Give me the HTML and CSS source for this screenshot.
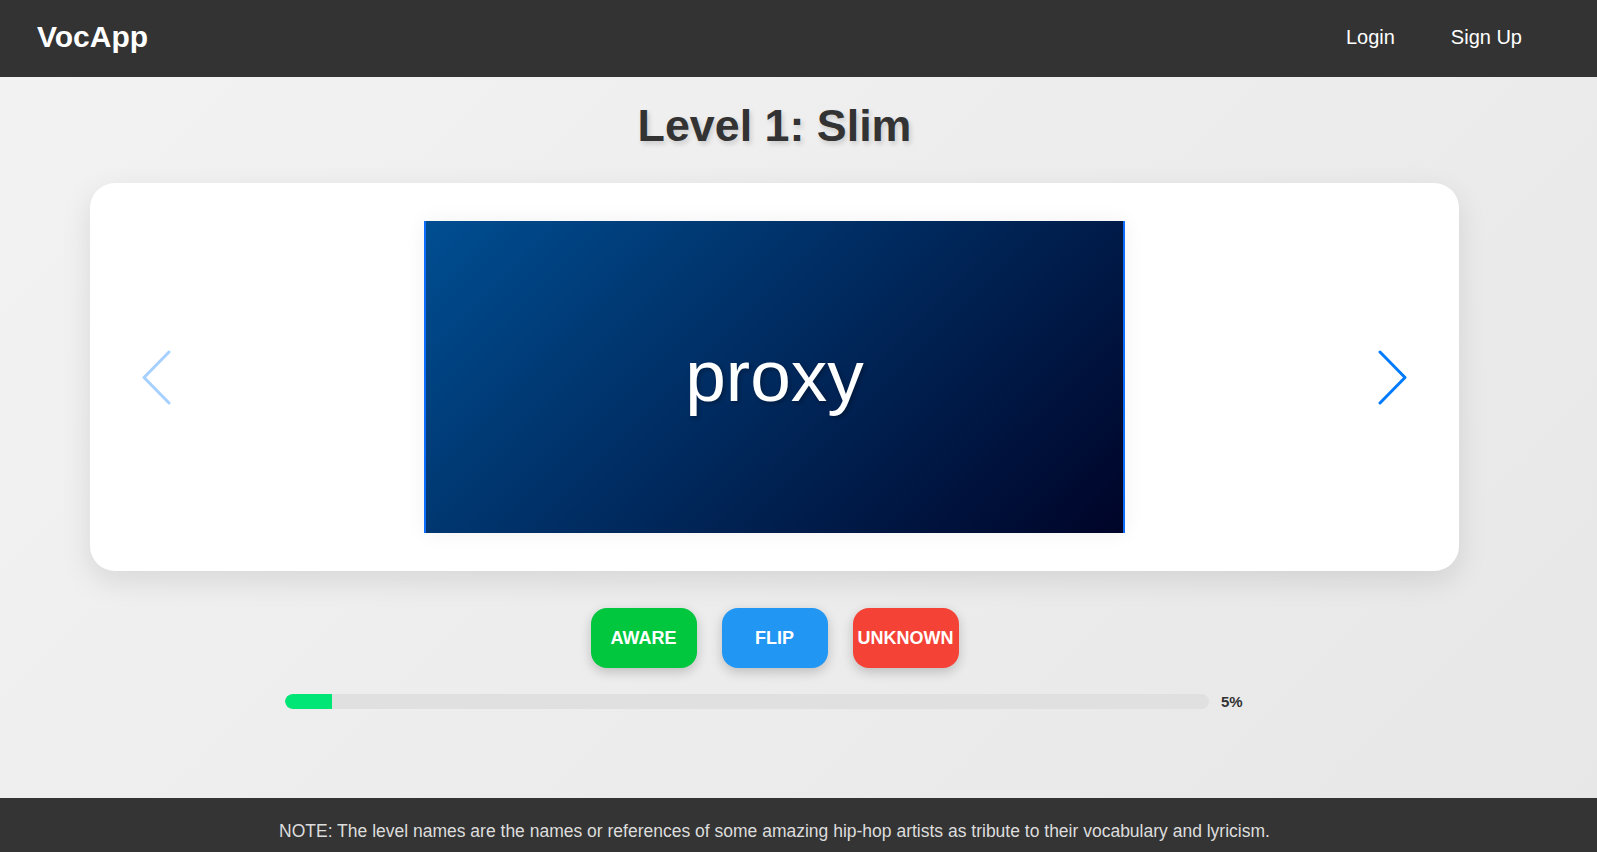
FILE: index.html
```html
<!DOCTYPE html>
<html lang="en">
<head>
<meta charset="utf-8">
<title>VocApp</title>
<link rel="stylesheet" href="styles.css">
</head>
<body>
<header class="topbar">
  <a class="logo" href="#">VocApp</a>
  <nav class="nav">
    <a href="#">Login</a>
    <a href="#">Sign Up</a>
  </nav>
</header>
<main class="main">
  <h1 class="level-title">Level 1: Slim</h1>
  <section class="card">
    <button class="arrow arrow-disabled" aria-label="Previous">
      <svg width="30" height="55" viewBox="0 0 30 55"><path d="M28 2 L3 27.5 L28 53" fill="none" stroke="currentColor" stroke-width="3" stroke-linecap="round" stroke-linejoin="round"/></svg>
    </button>
    <div class="flashcard">
      <span class="word">proxy</span>
    </div>
    <button class="arrow" aria-label="Next">
      <svg width="30" height="55" viewBox="0 0 30 55"><path d="M2 2 L27 27.5 L2 53" fill="none" stroke="currentColor" stroke-width="3" stroke-linecap="round" stroke-linejoin="round"/></svg>
    </button>
  </section>
  <div class="actions">
    <button class="btn btn-aware">AWARE</button>
    <button class="btn btn-flip">FLIP</button>
    <button class="btn btn-unknown">UNKNOWN</button>
  </div>
  <div class="progress">
    <div class="track"><div class="fill" style="width:5.1%"></div></div>
    <span class="pct">5%</span>
  </div>
</main>
<footer class="footer">
  <p class="footer-text">NOTE: The level names are the names or references of some amazing hip-hop artists as tribute to their vocabulary and lyricism.</p>
</footer>
</body>
</html>
```
FILE: styles.css
```css
* { box-sizing: border-box; }
html, body { margin: 0; padding: 0; }
body {
  font-family: "Liberation Sans", Arial, sans-serif;
  background: linear-gradient(135deg, #f3f3f3 0%, #e7e7e7 100%);
  color: #333;
  overflow: hidden;
}
.topbar {
  height: 77px;
  background: #333;
  display: flex;
  align-items: center;
  justify-content: space-between;
  padding: 0 75px 3px 37px;
}
.logo {
  color: #fff;
  font-weight: bold;
  font-size: 30px;
  text-decoration: none;
}
.nav { display: flex; gap: 56px; }
.nav a {
  color: #fff;
  font-size: 20px;
  text-decoration: none;
}
.main {
  width: calc(100% - 48px);
  display: flex;
  flex-direction: column;
  align-items: center;
  padding-bottom: 88px;
}
.level-title {
  margin: 23px 0 33px;
  font-size: 44.8px;
  line-height: 50px;
  font-weight: bold;
  color: #333;
  text-shadow: 2px 3px 5px rgba(0,0,0,0.15);
}
.card {
  width: 1369px;
  height: 388px;
  background: #fff;
  border-radius: 25px;
  box-shadow: 0 10px 30px rgba(0,0,0,0.1);
  display: flex;
  align-items: center;
  justify-content: space-between;
  padding: 38px 51px;
}
.arrow {
  background: none;
  border: none;
  padding: 0;
  color: #007bff;
  display: flex;
  cursor: pointer;
}
.arrow-disabled { opacity: 0.35; }
.flashcard {
  width: 701px;
  height: 312px;
  background: linear-gradient(135deg, #004e92 0%, #000428 100%);
  border-left: 2px solid #0d6efd;
  border-right: 2px solid #0d6efd;
  box-shadow: 0 0 20px rgba(0,0,0,0.06);
  display: flex;
  align-items: center;
  justify-content: center;
}
.word {
  color: #fff;
  font-size: 73px;
  text-shadow: 2px 2px 4px rgba(0,0,0,0.3);
  margin-top: -4px;
}
.actions {
  margin-top: 37px;
  display: flex;
  gap: 25px;
}
.btn {
  width: 106px;
  height: 60px;
  padding: 0;
  border: none;
  border-radius: 16px;
  color: #fff;
  font-family: "Liberation Sans", Arial, sans-serif;
  font-weight: bold;
  font-size: 18px;
  box-shadow: 0 4px 12px rgba(0,0,0,0.2);
  cursor: pointer;
}
.btn-aware { background: #00c73e; }
.btn-flip { background: #2196f3; }
.btn-unknown { background: #f44336; }
.progress {
  margin-top: 25px;
  width: 979px;
  display: flex;
  align-items: center;
  gap: 12px;
}
.track {
  flex: 1;
  height: 15px;
  background: #e0e0e0;
  border-radius: 8px;
  overflow: hidden;
}
.fill {
  height: 100%;
  background: #00e676;
  border-radius: 8px 0 0 8px;
}
.pct {
  width: 43px;
  font-size: 15px;
  font-weight: bold;
  color: #333;
}
.footer {
  background: #343434;
  padding: 23px 0 17px;
}
.footer-text {
  width: calc(100% - 48px);
  margin: 0;
  text-align: center;
  color: #ddd;
  font-size: 17.5px;
  line-height: 20px;
}
```
